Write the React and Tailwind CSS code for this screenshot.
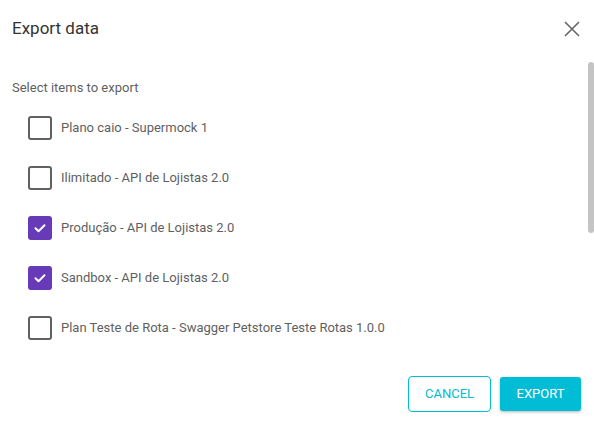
import React from "react";

const items = [
  { label: "Plano caio - Supermock 1", checked: false },
  { label: "Ilimitado - API de Lojistas 2.0", checked: false },
  { label: "Produção - API de Lojistas 2.0", checked: true },
  { label: "Sandbox - API de Lojistas 2.0", checked: true },
  { label: "Plan Teste de Rota - Swagger Petstore Teste Rotas 1.0.0", checked: false },
];

function Box({ checked }) {
  if (checked) {
    return (
      <div className="w-[24px] h-[24px] rounded-[3px] bg-[#673ab7] flex items-center justify-center shrink-0">
        <svg width="24" height="24" viewBox="0 0 24 24" fill="none">
          <path d="M7.5 12.2l3 3 6-6" stroke="white" strokeWidth="2" strokeLinecap="round" strokeLinejoin="round" />
        </svg>
      </div>
    );
  }
  return <div className="w-[24px] h-[24px] rounded-[3px] border-2 border-[#616161] shrink-0" />;
}

export default function App() {
  return (
    <div className="w-[594px] h-[423px] bg-white flex flex-col overflow-hidden" style={{ fontFamily: "Roboto, 'Liberation Sans', sans-serif" }}>
      <div className="h-[56px] flex items-center justify-between pl-3 pr-[14px] pt-[2px] shrink-0">
        <span className="text-[17px] text-[#333333]">Export data</span>
        <svg width="16" height="16" viewBox="0 0 16 16" fill="none">
          <path d="M1 1l14 14M15 1L1 15" stroke="#666666" strokeWidth="1.6" />
        </svg>
      </div>
      <div className="relative h-[304px] shrink-0 overflow-hidden">
        <div className="pt-[24px] pl-3 text-[13px] leading-[16px] text-[#5f5f5f]">Select items to export</div>
        <div className="mt-[7px] flex flex-col">
          {items.map((it) => (
            <div key={it.label} className="h-[50px] flex items-center pl-[28px] gap-[9px]">
              <Box checked={it.checked} />
              <span className="text-[13px] text-[#5f5f5f]">{it.label}</span>
            </div>
          ))}
        </div>
        <div className="absolute right-0 top-[6px] w-[6px] h-[171px] rounded-full bg-[#c4c4c4]" />
      </div>
      <div className="flex justify-end gap-[9px] pt-4 pr-[13px]">
        <button className="h-[36px] w-[83px] rounded-[4px] border border-[#00bcd4] text-[#00bcd4] text-[13px] uppercase bg-white">Cancel</button>
        <button className="h-[34px] mt-[1px] w-[81px] rounded-[3px] bg-[#00bcd4] text-white text-[13px] uppercase shadow-[0_1px_3px_rgba(0,0,0,0.3)]">Export</button>
      </div>
    </div>
  );
}
